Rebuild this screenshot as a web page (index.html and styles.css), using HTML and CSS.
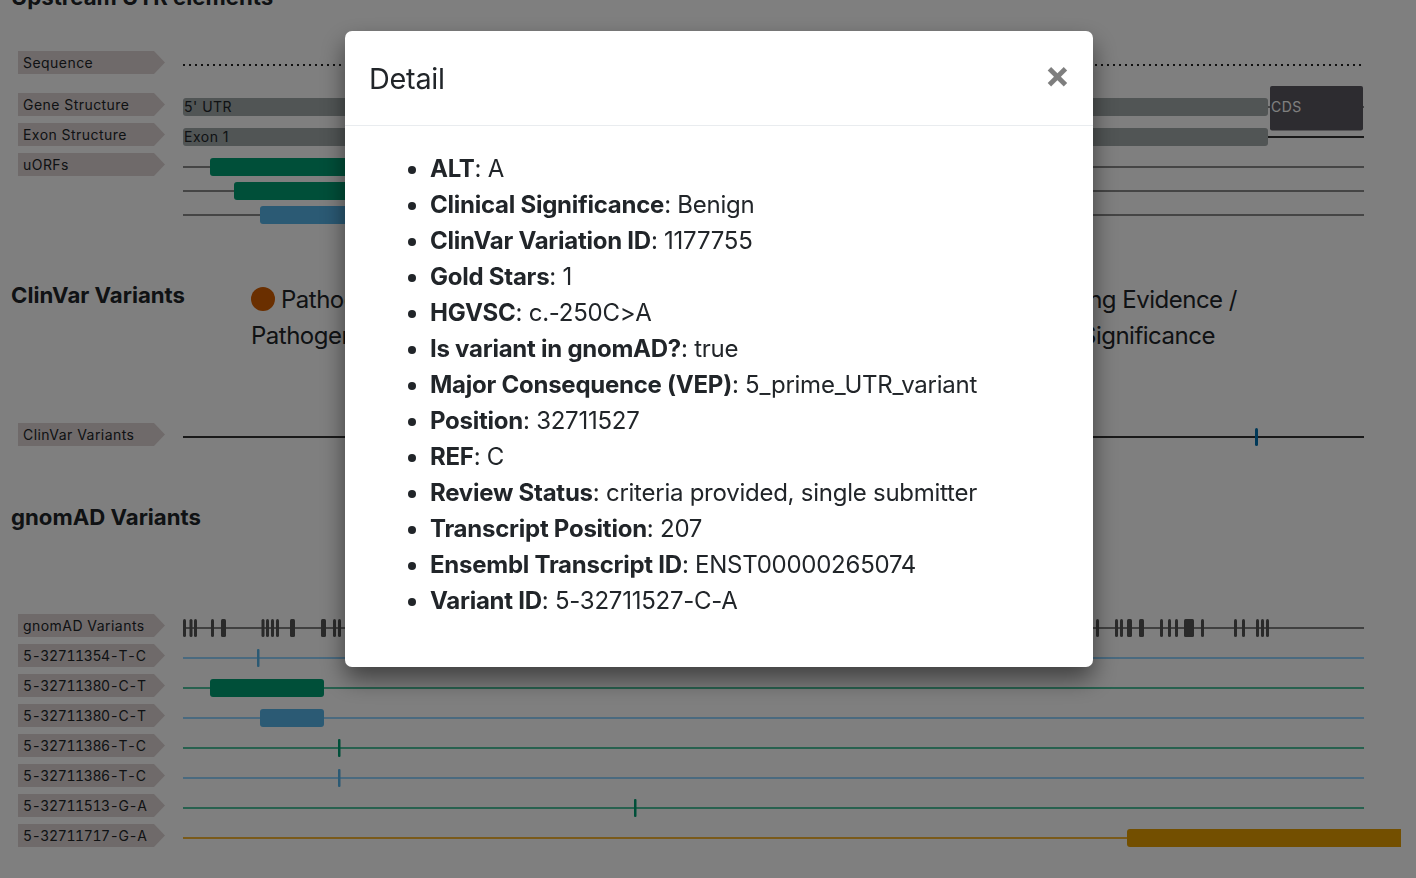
FILE: index.html
```html
<!DOCTYPE html>
<html lang="en">

<head>
    <meta charset="UTF-8">
    <title>Upstream UTR elements</title>
    <link rel="stylesheet" href="styles.css">
</head>

<body>
    <div id="main">
        <h2 class="title title-top">Upstream UTR elements</h2>

        <div class="viewer viewer-top">
            <div class="row row-seq">
                <div class="tag">Sequence</div>
                <svg class="track" width="1233" height="30">
                    <line class="dots" x1="0" y1="14" x2="1180" y2="14"></line>
                </svg>
            </div>
            <div class="row">
                <div class="tag">Gene Structure</div>
                <svg class="track" width="1233" height="30">
                    <line class="line-thin" x1="0" y1="14" x2="1181" y2="14"></line>
                    <rect class="bar-gene" x="0" y="5" width="1085" height="18" rx="3"></rect>
                    <text class="bar-text" x="1" y="19">5' UTR</text>
                    <rect class="bar-cds" x="1087" y="-7" width="93" height="44.5" rx="2"></rect>
                    <text class="cds-text" x="1088" y="19">CDS</text>
                </svg>
            </div>
            <div class="row">
                <div class="tag">Exon Structure</div>
                <svg class="track" width="1233" height="30">
                    <line class="line-dark" x1="0" y1="14" x2="1181" y2="14"></line>
                    <rect class="bar-gene" x="0" y="5" width="1085" height="18" rx="3"></rect>
                    <text class="bar-text" x="1" y="19">Exon 1</text>
                </svg>
            </div>
            <div class="row row-orf">
                <div class="tag">uORFs</div>
                <svg class="track" width="1233" height="72">
                    <line class="line-thin" x1="0" y1="14" x2="1181" y2="14"></line>
                    <line class="line-thin" x1="0" y1="38" x2="1181" y2="38"></line>
                    <line class="line-thin" x1="0" y1="62" x2="1181" y2="62"></line>
                    <rect class="green" x="27" y="5" width="400" height="18" rx="3"></rect>
                    <rect class="green" x="51" y="29" width="400" height="18" rx="3"></rect>
                    <rect class="blue" x="77" y="53" width="400" height="18" rx="3"></rect>
                </svg>
            </div>
        </div>

        <div class="head head-clinvar">
            <h2 class="title title-side">ClinVar Variants</h2>
            <div class="legend">
                <div><span class="dot dot-red"></span>Pathogenic / Likely<br>Pathogenic</div>
                <div><span class="dot dot-blue"></span>Benign / Likely<br>Benign</div>
                <div><span class="dot dot-gold"></span>Conflicting Evidence /<br>Uncertain Significance</div>
            </div>
        </div>

        <div class="viewer viewer-clinvar">
            <div class="row">
                <div class="tag">ClinVar Variants</div>
                <svg class="track" width="1233" height="30">
                    <line class="line-dark" x1="0" y1="14" x2="1181" y2="14"></line>
                    <rect class="tick-blue" x="1072" y="5" width="3" height="18" rx="1.5"></rect>
                </svg>
            </div>
        </div>

        <div class="head head-gnomad">
            <h2 class="title title-side">gnomAD Variants</h2>
        </div>

        <div class="viewer viewer-gnomad">
            <div class="row">
                <div class="tag">gnomAD Variants</div>
                <svg class="track" width="1233" height="30">
                    <line class="line-mid" x1="0" y1="14" x2="1181" y2="14"></line>
                    <g class="ticks">
                        <rect x="0" y="5" width="3" height="18" rx="1.5"></rect>
                        <rect x="6.5" y="5" width="3" height="18" rx="1.5"></rect>
                        <rect x="11" y="5" width="3" height="18" rx="1.5"></rect>
                        <rect x="28" y="5" width="3" height="18" rx="1.5"></rect>
                        <rect x="38" y="5" width="5" height="18" rx="1.5"></rect>
                        <rect x="78.5" y="5" width="3" height="18" rx="1.5"></rect>
                        <rect x="83" y="5" width="3" height="18" rx="1.5"></rect>
                        <rect x="88" y="5" width="3" height="18" rx="1.5"></rect>
                        <rect x="93" y="5" width="3" height="18" rx="1.5"></rect>
                        <rect x="107" y="5" width="5" height="18" rx="1.5"></rect>
                        <rect x="138" y="5" width="5" height="18" rx="1.5"></rect>
                        <rect x="150" y="5" width="3" height="18" rx="1.5"></rect>
                        <rect x="155" y="5" width="3" height="18" rx="1.5"></rect>
                        <rect x="913" y="5" width="3" height="18" rx="1.5"></rect>
                        <rect x="932" y="5" width="3" height="18" rx="1.5"></rect>
                        <rect x="937" y="5" width="3" height="18" rx="1.5"></rect>
                        <rect x="944" y="5" width="5" height="18" rx="1.5"></rect>
                        <rect x="956" y="5" width="5" height="18" rx="1.5"></rect>
                        <rect x="977" y="5" width="3" height="18" rx="1.5"></rect>
                        <rect x="985" y="5" width="3" height="18" rx="1.5"></rect>
                        <rect x="992" y="5" width="3" height="18" rx="1.5"></rect>
                        <rect x="1001" y="5" width="10" height="18" rx="1.5"></rect>
                        <rect x="1018" y="5" width="3" height="18" rx="1.5"></rect>
                        <rect x="1051" y="5" width="3" height="18" rx="1.5"></rect>
                        <rect x="1059" y="5" width="3" height="18" rx="1.5"></rect>
                        <rect x="1073" y="5" width="3" height="18" rx="1.5"></rect>
                        <rect x="1078" y="5" width="3" height="18" rx="1.5"></rect>
                        <rect x="1083" y="5" width="3" height="18" rx="1.5"></rect>
                    </g>
                </svg>
            </div>
            <div class="row">
                <div class="tag tag-id">5-32711354-T-C</div>
                <svg class="track" width="1233" height="30">
                    <line class="line-blue" x1="0" y1="14" x2="1181" y2="14"></line>
                    <rect class="tick-light" x="74" y="5" width="2.5" height="18" rx="1"></rect>
                </svg>
            </div>
            <div class="row">
                <div class="tag tag-id">5-32711380-C-T</div>
                <svg class="track" width="1233" height="30">
                    <line class="line-green" x1="0" y1="14" x2="1181" y2="14"></line>
                    <rect class="green" x="27" y="5" width="114" height="18" rx="3"></rect>
                </svg>
            </div>
            <div class="row">
                <div class="tag tag-id">5-32711380-C-T</div>
                <svg class="track" width="1233" height="30">
                    <line class="line-blue" x1="0" y1="14" x2="1181" y2="14"></line>
                    <rect class="blue" x="77" y="5" width="64" height="18" rx="3"></rect>
                </svg>
            </div>
            <div class="row">
                <div class="tag tag-id">5-32711386-T-C</div>
                <svg class="track" width="1233" height="30">
                    <line class="line-green" x1="0" y1="14" x2="1181" y2="14"></line>
                    <rect class="green" x="155" y="5" width="2.5" height="18" rx="1"></rect>
                </svg>
            </div>
            <div class="row">
                <div class="tag tag-id">5-32711386-T-C</div>
                <svg class="track" width="1233" height="30">
                    <line class="line-blue" x1="0" y1="14" x2="1181" y2="14"></line>
                    <rect class="tick-light" x="155" y="5" width="2.5" height="18" rx="1"></rect>
                </svg>
            </div>
            <div class="row">
                <div class="tag tag-id">5-32711513-G-A</div>
                <svg class="track" width="1233" height="30">
                    <line class="line-green" x1="0" y1="14" x2="1181" y2="14"></line>
                    <rect class="green" x="451" y="5" width="2.5" height="18" rx="1"></rect>
                </svg>
            </div>
            <div class="row">
                <div class="tag tag-id">5-32711717-G-A</div>
                <svg class="track track-clip" width="1218" height="30">
                    <line class="line-gold" x1="0" y1="14" x2="1181" y2="14"></line>
                    <rect class="gold" x="944" y="5" width="290" height="18" rx="3"></rect>
                </svg>
            </div>
        </div>
    </div>

    <div class="backdrop"></div>

    <div class="modal">
        <div class="modal-content">
            <div class="modal-header">
                <h5 class="modal-title">Detail</h5>
                <span class="close">&times;</span>
            </div>
            <div class="modal-body">
                <ul>
                    <li><b>ALT</b>: A</li>
                    <li><b>Clinical Significance</b>: Benign</li>
                    <li><b>ClinVar Variation ID</b>: 1177755</li>
                    <li><b>Gold Stars</b>: 1</li>
                    <li><b>HGVSC</b>: c.-250C&gt;A</li>
                    <li><b>Is variant in gnomAD?</b>: true</li>
                    <li><b>Major Consequence (VEP)</b>: 5_prime_UTR_variant</li>
                    <li><b>Position</b>: 32711527</li>
                    <li><b>REF</b>: C</li>
                    <li><b>Review Status</b>: criteria provided, single submitter</li>
                    <li><b>Transcript Position</b>: 207</li>
                    <li><b>Ensembl Transcript ID</b>: ENST00000265074</li>
                    <li><b>Variant ID</b>: 5-32711527-C-A</li>
                </ul>
            </div>
        </div>
    </div>
</body>

</html>
```

FILE: styles.css
```css
* {
    padding: 0;
    margin: 0;
    box-sizing: border-box;
}

html,
body {
    height: 100%;
    overflow: hidden;
}

body {
    background: #fff;
    color: #212529;
    font-family: Inter, "Liberation Sans", sans-serif;
    font-size: 24px;
    line-height: 36px;
    letter-spacing: -0.25px;
}

#main {
    margin-top: -16px;
}

.title {
    font-size: 22.2px;
    line-height: 26px;
    font-weight: 700;
    letter-spacing: 0;
}

.title-top {
    height: 30px;
    padding-left: 11px;
}

.title-side {
    width: 240px;
    flex: none;
}

.viewer {
    padding-left: 18px;
}

.viewer-top {
    margin-top: 37px;
}

.viewer-clinvar {
    margin-top: 69px;
}

.viewer-gnomad {
    margin-top: 84px;
}

.row {
    display: flex;
    gap: 18px;
    height: 30px;
}

.row-seq {
    height: 42px;
}

.row-orf {
    height: 72px;
}

.tag {
    width: 147px;
    height: 23px;
    flex: none;
    padding-left: 5px;
    background: #dfd5d5;
    clip-path: polygon(0 0, 136px 0, 100% 50%, 136px 100%, 0 100%);
    font-size: 14px;
    line-height: 23px;
    letter-spacing: 0.45px;
    color: #212529;
}

.tag-id {
    font-variant-numeric: tabular-nums;
    letter-spacing: -0.4px;
}

.track {
    flex: none;
    overflow: visible;
}

.track-clip {
    overflow: hidden;
}

.head {
    display: flex;
    padding-left: 11px;
}

.head-clinvar {
    margin-top: 57px;
    height: 72px;
}

.head-gnomad {
    margin-top: 51px;
    height: 26px;
}

.legend {
    display: flex;
    justify-content: space-between;
    width: 986px;
    letter-spacing: -0.5px;
}

.dot {
    display: inline-block;
    width: 24px;
    height: 24px;
    margin-right: 6px;
    border-radius: 50%;
    vertical-align: -3px;
}

.dot-red {
    background: #d55e00;
}

.dot-blue {
    background: #0072b2;
}

.dot-gold {
    background: #cc79a7;
}

.dots {
    stroke: #222;
    stroke-width: 2;
    stroke-dasharray: 2 4;
}

.line-thin {
    stroke: #8a8a8a;
    stroke-width: 2;
}

.line-mid {
    stroke: #808080;
    stroke-width: 2;
}

.line-dark {
    stroke: #333;
    stroke-width: 2;
}

.line-blue {
    stroke: #94d4ff;
    stroke-width: 2;
}

.line-green {
    stroke: #50c29e;
    stroke-width: 2;
}

.line-gold {
    stroke: #f4b434;
    stroke-width: 2;
}

.bar-gene {
    fill: #a2aaaa;
}

.bar-cds {
    fill: #5a5860;
}

.bar-text {
    font-size: 14px;
    letter-spacing: 0.5px;
    fill: #212529;
}

.cds-text {
    font-size: 14px;
    letter-spacing: 0.5px;
    fill: #fff;
}

.green {
    fill: #009e73;
}

.blue {
    fill: #56b4e9;
}

.gold {
    fill: #e69f00;
}

.tick-blue {
    fill: #0072b2;
}

.tick-light {
    fill: #56b4e9;
}

.ticks rect {
    fill: #555;
}

.backdrop {
    position: fixed;
    top: 0;
    left: 0;
    width: 100%;
    height: 100%;
    background: #000;
    opacity: 0.5;
}

.modal {
    position: fixed;
    top: 31px;
    left: 345px;
    width: 748px;
}

.modal-content {
    height: 636px;
    background: #fff;
    border-radius: 7px;
    box-shadow: 0 12px 24px rgba(0, 0, 0, 0.5);
}

.modal-header {
    display: flex;
    justify-content: space-between;
    align-items: center;
    height: 95px;
    padding: 0 25px;
    border-bottom: 1px solid #e9ecef;
}

.modal-title {
    font-size: 28.8px;
    line-height: 36px;
    font-weight: 400;
    margin-left: -1px;
    margin-top: 2px;
}

.close {
    font-size: 38px;
    font-weight: 700;
    line-height: 36px;
    color: #000;
    opacity: 0.5;
    margin-right: -2px;
    margin-top: -9px;
}

.modal-body {
    padding: 25px;
}

.modal-body ul {
    padding-left: 60px;
}
```
